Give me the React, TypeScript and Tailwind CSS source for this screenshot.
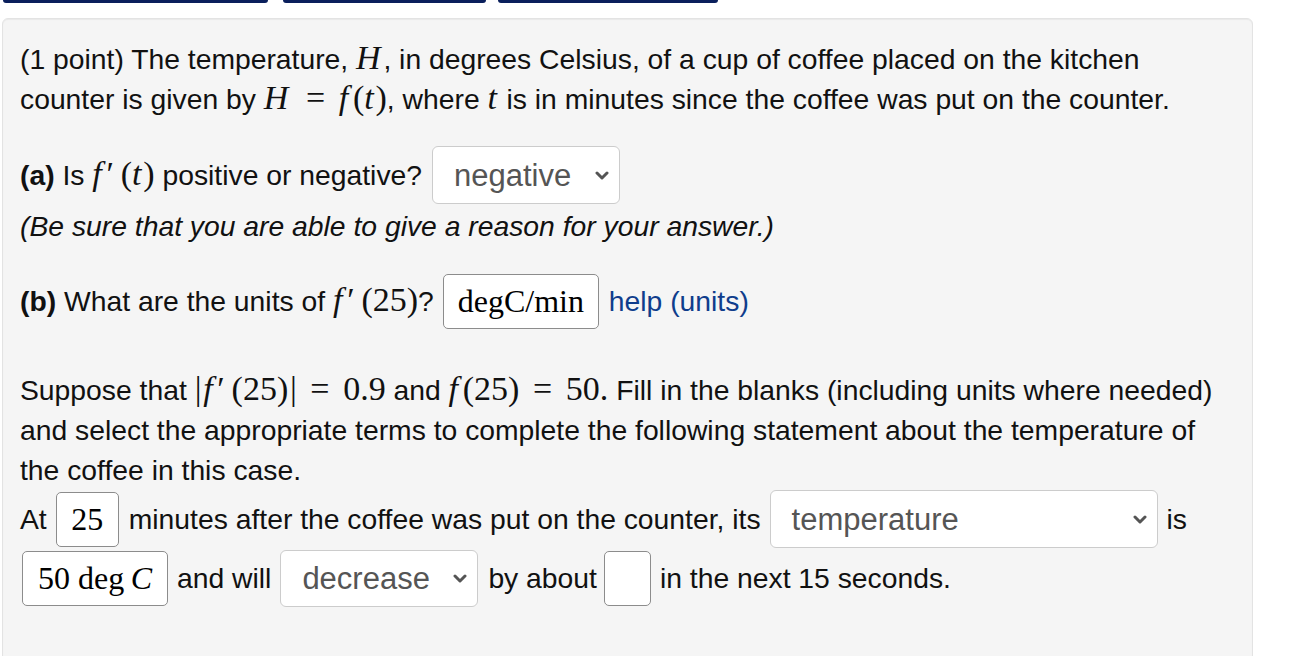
import type { ReactNode } from 'react'

const mathClasses = "font-['Liberation_Serif','Times_New_Roman',serif] text-[34px] leading-none"
const inputClasses =
  "flex h-[55px] items-center justify-center rounded-[5px] border-[1.5px] border-[#8c8c8c] bg-white font-['Liberation_Serif','Times_New_Roman',serif] text-[32px] text-black"

function M({ children }: { children: ReactNode }) {
  return <span className={mathClasses}>{children}</span>
}

function Eq() {
  return <span className="mx-[0.4em]">=</span>
}

// italic f, with the room TeX gives it
function F({ prime = false }: { prime?: boolean }) {
  return (
    <>
      <i className="mr-[0.14em]">f</i>
      {prime && <span className="mr-[0.2em]">′</span>}
    </>
  )
}

function Chevron() {
  return (
    <svg width="14" height="9" viewBox="0 0 14 9" fill="none" className="shrink-0">
      <path d="M2 2 7 7 12 2" stroke="#555" strokeWidth="3" strokeLinecap="round" strokeLinejoin="round" />
    </svg>
  )
}

function FakeSelect({ value, width, height = 'h-[58px]' }: { value: string; width: string; height?: string }) {
  return (
    <div
      className={`${width} ${height} flex items-center justify-between rounded-[6px] border border-[#cccccc] bg-white pl-[21px] pr-[10px] text-[31px] text-[#555]`}
    >
      <span className="leading-none">{value}</span>
      <Chevron />
    </div>
  )
}

export default function App() {
  return (
    <div className="min-h-screen bg-white font-['Liberation_Sans',Arial,sans-serif] text-[28.3px] text-[#111]">
      {/* nav buttons, cut off at the top */}
      <div className="flex h-[3px]">
        <div className="ml-[3px] w-[265px] rounded-b-[4px] bg-[#0a1f5c]" />
        <div className="ml-[15px] w-[203px] rounded-b-[4px] bg-[#0a1f5c]" />
        <div className="ml-[12px] w-[220px] rounded-b-[4px] bg-[#0a1f5c]" />
      </div>

      <div className="mt-[15px] ml-[2px] h-[700px] w-[1251px] rounded-[6px] border border-[#e3e3e3] bg-[#f5f5f5] pt-[20px] pl-[17px] shadow-[inset_0_1px_1px_rgba(0,0,0,0.05)]">
        <p className="leading-[40px] whitespace-nowrap">
          (1 point) The temperature,{' '}
          <M>
            <i className="mr-[0.08em]">H</i>
          </M>
          , in degrees Celsius, of a cup of coffee placed on the kitchen
          <br />
          counter is given by{' '}
          <M>
            <i className="mr-[0.12em]">H</i>
            <Eq />
            <F />(<i className="mr-[0.05em]">t</i>)
          </M>
          , where{' '}
          <M>
            <i className="mr-[0.05em]">t</i>
          </M>{' '}
          is in minutes since the coffee was put on the counter.
        </p>

        <div className="mt-[27px] flex h-[58px] items-center gap-[10px] whitespace-nowrap">
          <span className="leading-[40px]">
            <b>(a)</b> Is{' '}
            <M>
              <F prime />(<i className="mr-[0.05em]">t</i>)
            </M>{' '}
            positive or negative?
          </span>
          <FakeSelect value="negative" width="w-[188px]" />
        </div>

        <p className="mt-[2px] leading-[40px] italic">(Be sure that you are able to give a reason for your answer.)</p>

        <div className="mt-[27px] flex h-[56px] items-center gap-[9px] whitespace-nowrap">
          <span className="leading-[40px]">
            <b>(b)</b> What are the units of{' '}
            <M>
              <F prime />
              (25)
            </M>
            ?
          </span>
          <div className={`${inputClasses} w-[156px]`}>degC/min</div>
          <a className="ml-[1px] leading-[40px] text-[#0f3d8c]">help (units)</a>
        </div>

        <p className="mt-[41px] leading-[40px] whitespace-nowrap">
          Suppose that{' '}
          <M>
            <span className="mr-[0.05em]">|</span>
            <F prime />
            (25)
            <span className="ml-[0.05em]">|</span>
            <Eq />
            0.9
          </M>{' '}
          and{' '}
          <M>
            <F />
            (25)
            <Eq />
            50.
          </M>{' '}
          Fill in the blanks (including units where needed)
          <br />
          and select the appropriate terms to complete the following statement about the temperature of
          <br />
          the coffee in this case.
        </p>

        <div className="flex h-[58px] items-center gap-[9px] whitespace-nowrap">
          <span className="leading-[40px]">At</span>
          <div className={`${inputClasses} w-[63px]`}>25</div>
          <span className="ml-[1px] leading-[40px]">minutes after the coffee was put on the counter, its</span>
          <FakeSelect value="temperature" width="w-[388px]" />
          <span className="leading-[40px]">is</span>
        </div>

        <div className="mt-[1px] flex h-[58px] items-center gap-[9px] whitespace-nowrap">
          <div className={`${inputClasses} ml-[2px] w-[146px]`}>
            50 deg <i className="ml-[0.2em]">C</i>
          </div>
          <span className="leading-[40px]">and will</span>
          <FakeSelect value="decrease" width="w-[198px]" height="h-[57px]" />
          <span className="ml-[1px] leading-[40px]">by about</span>
          <div className={`${inputClasses} -ml-[2px] w-[47px]`} />
          <span className="leading-[40px]">in the next 15 seconds.</span>
        </div>
      </div>
    </div>
  )
}
